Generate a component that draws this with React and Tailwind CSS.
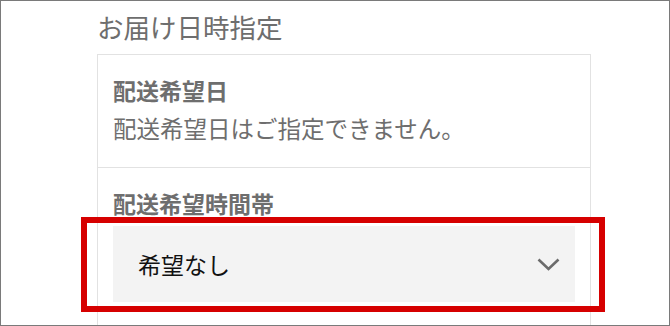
import React from "react";

const font = { fontFamily: '"Noto Sans CJK JP", "Noto Sans", sans-serif' };

const Chevron = () => (
  <svg width="23" height="13" viewBox="0 0 23 13" fill="none">
    <polyline
      points="1.5,1.5 11.5,11 21.5,1.5"
      stroke="#6b6b6b"
      strokeWidth="2.6"
      strokeLinecap="butt"
      strokeLinejoin="miter"
    />
  </svg>
);

export default function App() {
  return (
    <div
      className="relative w-[670px] h-[326px] overflow-hidden bg-white border border-[#7a7a7a] pl-[96px] pt-[13px]"
      style={font}
    >
      {/* section title */}
      <h2 className="text-[26.5px] leading-[26px] text-[#6e6e6e] mb-[14px]">お届け日時指定</h2>

      {/* card */}
      <div className="w-[494px] h-[300px] border border-b-0 border-[#e2e2e2]">
        <div className="px-[15px] pt-[24px] pb-[27px]">
          <p className="text-[23px] leading-[23px] font-bold text-[#6e6e6e]">配送希望日</p>
          <p className="text-[23.5px] leading-[23px] text-[#6e6e6e] mt-[15px]">配送希望日はご指定できません。</p>
        </div>
        <div className="border-t border-[#e2e2e2] px-[15px] pt-[24px]">
          <p className="text-[23px] leading-[23px] font-bold text-[#6e6e6e]">配送希望時間帯</p>
          <div className="mt-[11px] h-[76px] bg-[#f3f3f3] flex items-center justify-between pl-[25px] pr-[15px]">
            <span className="text-[23px] leading-[23px] text-[#111111]">希望なし</span>
            <Chevron />
          </div>
        </div>
      </div>

      {/* highlight annotation */}
      <div className="absolute left-[80px] top-[216px] w-[524px] h-[95px] border-[6px] border-[#d60000]" />
    </div>
  );
}
